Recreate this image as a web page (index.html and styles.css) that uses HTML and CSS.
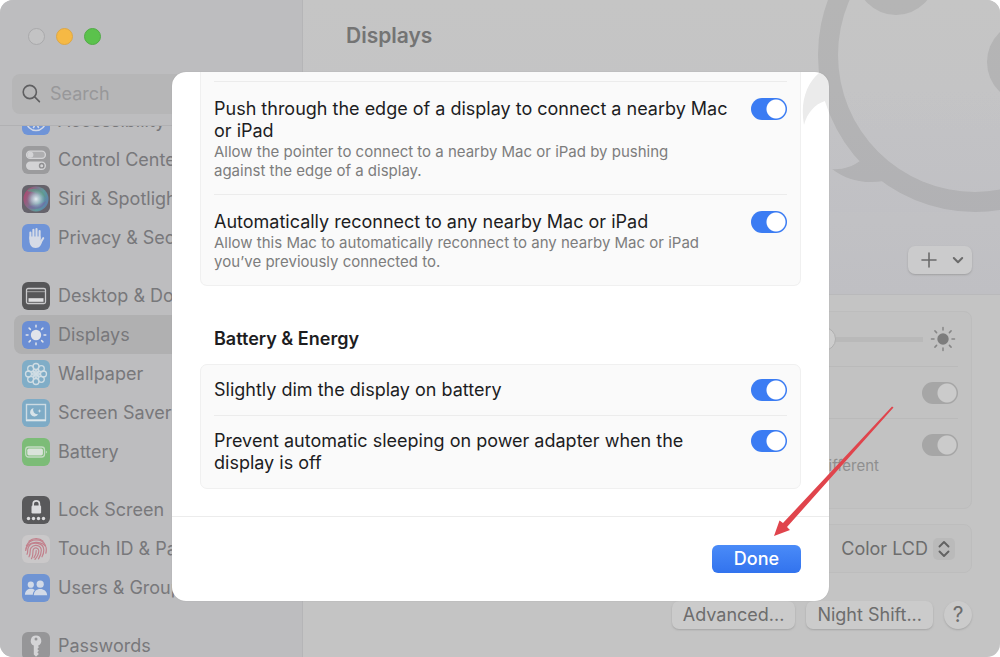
FILE: index.html
```html
<!DOCTYPE html>
<html lang="en">
<head>
	<title>Displays</title>
	<meta charset="utf-8">
	<link rel="stylesheet" href="styles.css">
</head>
<body>
<div class="window">
	<aside class="sidebar">
		<div class="lights">
			<span class="light"></span>
			<span class="light yellow"></span>
			<span class="light green"></span>
		</div>
		<label class="search">
			<svg width="20" height="20" viewBox="0 0 20 20" fill="none" stroke="#5f5f61" stroke-width="1.6" stroke-linecap="round"><circle cx="7.8" cy="8" r="6.6"/><path d="M12.7 12.9L17.4 17.6"/></svg>
			<input type="search" placeholder="Search" aria-label="Search">
		</label>
		<nav class="list">
			<ul>
				<li><a href="#">
					<svg class="icon" viewBox="0 0 28 28"><rect width="28" height="28" rx="6" fill="#6f94d8"/><circle cx="14" cy="14" r="9.5" fill="none" stroke="#d2d8e6" stroke-width="1.6"/><circle cx="14" cy="9" r="1.6" fill="#d2d8e6"/><path d="M8.5 12L14 13.2L19.5 12M14 13V16L11.5 20.5M14 16L16.5 20.5" fill="none" stroke="#d2d8e6" stroke-width="1.6" stroke-linecap="round"/></svg>
					Accessibility</a></li>
				<li><a href="#">
					<svg class="icon" viewBox="0 0 28 28"><rect width="28" height="28" rx="6" fill="#9b9b9d"/><rect x="4.6" y="5.1" width="18.8" height="7.3" rx="3.6" fill="#aeaeb0" stroke="#d3d3d5" stroke-width="1.4"/><circle cx="8.4" cy="8.7" r="3" fill="#d3d3d5"/><rect x="4" y="15.5" width="20" height="8.5" rx="4.2" fill="#d3d3d5"/><circle cx="19.7" cy="19.7" r="2.2" fill="#d3d3d5" stroke="#8f8f91" stroke-width="1.4"/></svg>
					Control Center</a></li>
				<li><a href="#">
					<svg class="icon" viewBox="0 0 28 28">
						<defs>
							<linearGradient id="siri" x1="0" y1="0.3" x2="1" y2="0.7"><stop offset="0" stop-color="#b0476f"/><stop offset="0.35" stop-color="#80708c"/><stop offset="0.65" stop-color="#609b9b"/><stop offset="1" stop-color="#5d7fae"/></linearGradient>
							<radialGradient id="glow"><stop offset="0" stop-color="#e6edf2"/><stop offset="0.5" stop-color="#c5d6e2" stop-opacity="0.6"/><stop offset="1" stop-color="#a0bccc" stop-opacity="0"/></radialGradient>
						</defs>
						<rect width="28" height="28" rx="6" fill="#66636b"/><circle cx="14" cy="14" r="12.5" fill="url(#siri)"/><path d="M5 6C12 1 22 5 24 13C18 8 10 7 5 6Z" fill="#609a87" opacity="0.7"/><path d="M6 22C13 27 22 23 24 16C18 20 12 19 6 22Z" fill="#7860a6" opacity="0.5"/><circle cx="14" cy="14" r="9" fill="url(#glow)"/></svg>
					Siri &amp; Spotlight</a></li>
				<li><a href="#">
					<svg class="icon" viewBox="0 0 28 28"><rect width="28" height="28" rx="6" fill="#6f94d8"/><g fill="none" stroke="#d6dbe6" stroke-width="2.1" stroke-linecap="round"><path d="M8.4 15V8.6M11.4 14V5.8M14.5 14V5M17.6 15V7M21.2 14.2L18.5 18.5"/></g><path d="M7.4 12.5H18.6V16.5L20.5 15.5C19.8 20.5 17.8 24 13.7 24C9.5 24 7.4 20.5 7.4 16.5Z" fill="#d6dbe6"/></svg>
					Privacy &amp; Security</a></li>
			</ul>
			<ul>
				<li><a href="#">
					<svg class="icon" viewBox="0 0 28 28"><rect width="28" height="28" rx="6" fill="#565658"/><rect x="4.5" y="6.5" width="19" height="15" rx="1.5" fill="none" stroke="#cacacc" stroke-width="1.3"/><path d="M5 9.7H23" stroke="#a5a5a7"/><rect x="6.5" y="16.2" width="15" height="3.6" fill="#dedee0"/></svg>
					Desktop &amp; Dock</a></li>
				<li class="selected"><a href="#">
					<svg class="icon" viewBox="0 0 28 28"><rect width="28" height="28" rx="6" fill="#6b8ed4"/><circle cx="14" cy="14" r="5.2" fill="#e1e4ea"/><g stroke="#e1e4ea" stroke-width="1.5" stroke-linecap="round"><path d="M14 4.2V6M14 22V23.8M4.2 14H6M22 14H23.8M7.1 7.1L8.4 8.4M19.6 19.6L20.9 20.9M7.1 20.9L8.4 19.6M19.6 8.4L20.9 7.1"/></g></svg>
					Displays</a></li>
				<li><a href="#">
					<svg class="icon" viewBox="0 0 28 28"><rect width="28" height="28" rx="6" fill="#80adc7"/><g fill="none" stroke="#d0dde4" stroke-width="1.3"><circle cx="14" cy="6.5" r="3"/><circle cx="19.3" cy="8.7" r="3"/><circle cx="21.5" cy="14" r="3"/><circle cx="19.3" cy="19.3" r="3"/><circle cx="14" cy="21.5" r="3"/><circle cx="8.7" cy="19.3" r="3"/><circle cx="6.5" cy="14" r="3"/><circle cx="8.7" cy="8.7" r="3"/><circle cx="14" cy="14" r="3.2"/><path d="M14 9.5V18.5M9.5 14H18.5M10.8 10.8L17.2 17.2M10.8 17.2L17.2 10.8"/></g></svg>
					Wallpaper</a></li>
				<li><a href="#">
					<svg class="icon" viewBox="0 0 28 28"><rect width="28" height="28" rx="6" fill="#7eabc6"/><rect x="4.5" y="5.5" width="19" height="15.5" fill="none" stroke="#cddbe3" stroke-width="1.4"/><path d="M4 21.5H24" stroke="#dde6ea" stroke-width="1.6"/><path d="M11.5 9A4.3 4.3 0 1 0 16.2 15.2A4.3 4.3 0 0 1 11.5 9Z" fill="#d8e3e9"/><path d="M17.5 10l.5 1.5 1.5.5-1.5.5-.5 1.5-.5-1.5-1.5-.5 1.5-.5z" fill="#d8e3e9"/></svg>
					Screen Saver</a></li>
				<li><a href="#">
					<svg class="icon" viewBox="0 0 28 28"><rect width="28" height="28" rx="6" fill="#7cbc77"/><rect x="3.7" y="9" width="18.8" height="10" rx="2.8" fill="none" stroke="#c4dac3" stroke-width="1.3"/><rect x="5.3" y="10.6" width="15.6" height="6.8" rx="1.6" fill="#dae3da"/><path d="M23.8 12.4C25.3 13 25.3 15 23.8 15.6Z" fill="#c4dac3"/></svg>
					Battery</a></li>
			</ul>
			<ul>
				<li><a href="#">
					<svg class="icon" viewBox="0 0 28 28"><rect width="28" height="28" rx="6" fill="#59595b"/><rect x="9.5" y="9.5" width="9.6" height="8" rx="1.2" fill="#dcdcde"/><path d="M11.2 10V7.7C11.2 3.9 17.4 3.9 17.4 7.7V10" fill="none" stroke="#dcdcde" stroke-width="1.6"/><g fill="#dcdcde"><circle cx="6.5" cy="22.5" r="1.7"/><circle cx="11.5" cy="22.5" r="1.7"/><circle cx="16.5" cy="22.5" r="1.7"/><circle cx="21.5" cy="22.5" r="1.7"/></g></svg>
					Lock Screen</a></li>
				<li><a href="#">
					<svg class="icon" viewBox="0 0 28 28"><rect width="28" height="28" rx="6" fill="#cac8c9"/><g fill="none" stroke="#c2808c" stroke-width="1.2" stroke-linecap="round"><path d="M7 6.3C11 2.5 17.5 2.6 21 6.2"/><path d="M4.4 10.8C8.3 2.9 20 3 23.5 10.5"/><path d="M3.7 15.5C3.5 5 24.3 4.8 24.3 14.2C24.3 15.8 24.2 17 23.8 18.2"/><path d="M5 19.3C6.5 16 4.8 15.4 6.5 12C9.5 6.2 21.8 7.3 21.8 15C21.8 18 21 20 20 21.8"/><path d="M7 21.8C9.3 18 7 15.4 9.2 12.7C12.5 8.6 19.3 10.5 19.3 15.5C19.3 18.5 18 21.5 16.5 23.8"/><path d="M9.5 23.7C12 19.5 10 16.5 11.5 14.2C13 12 16.8 13 16.8 15.7C16.8 18.5 15 22 13 24.4"/><path d="M14.2 15.5C14.5 18 13.5 20.5 12 22.7"/></g></svg>
					Touch ID &amp; Password</a></li>
				<li><a href="#">
					<svg class="icon" viewBox="0 0 28 28"><rect width="28" height="28" rx="6" fill="#6f94d3"/><g fill="#d2dae7"><circle cx="8.8" cy="10.7" r="3.1"/><path d="M2.9 20.8C3.2 16.5 6 14.8 8.8 14.8C10.4 14.8 11.8 15.3 12.8 16.2C11.5 17.5 10.9 19 10.8 20.8Z"/><circle cx="18.2" cy="10.2" r="3.6"/><path d="M11.8 21.3C12 17.2 14.5 15 18.2 15C21.9 15 24.7 17.2 25.2 21.3Z"/></g></svg>
					Users &amp; Groups</a></li>
			</ul>
			<ul>
				<li><a href="#">
					<svg class="icon" viewBox="0 0 28 28"><rect width="28" height="28" rx="6" fill="#969698"/><path d="M14 3.5A5.3 5.3 0 0 0 11.8 13.6V22.5L14 24.7L16.8 22L15.3 20.3L16.9 18.7L15.3 17L16.9 15.2L16 13.7A5.3 5.3 0 0 0 14 3.5Z" fill="#d4d4d6"/><circle cx="14" cy="7" r="1.5" fill="#969698"/></svg>
					Passwords</a></li>
			</ul>
		</nav>
	</aside>

	<main class="main">
		<header class="head">
			<h1>Displays</h1>
			<button class="add" aria-label="Add display">
				<svg width="16" height="16" viewBox="0 0 16 16" fill="none" stroke="#6b6b6b" stroke-width="1.6" stroke-linecap="round"><path d="M8 1V15M1 8H15"/></svg>
				<svg width="12" height="12" viewBox="0 0 12 12" fill="none" stroke="#6b6b6b" stroke-width="2" stroke-linecap="round" stroke-linejoin="round"><path d="M1.8 4L6 8.2L10.2 4"/></svg>
			</button>
		</header>
		<div class="content">
			<div class="panel">
				<div class="line bright">
					<input type="range" class="slider" value="78" aria-label="Brightness">
					<svg width="26" height="26" viewBox="0 0 26 26"><circle cx="13" cy="13" r="5.7" fill="#7d7d7d"/><g stroke="#868686" stroke-width="1.5" stroke-linecap="round"><path d="M13 1.5V4M13 22V24.5M1.5 13H4M22 13H24.5M4.9 4.9L6.6 6.6M19.4 19.4L21.1 21.1M4.9 21.1L6.6 19.4M19.4 6.6L21.1 4.9"/></g></svg>
				</div>
				<div class="line">
					<input type="checkbox" class="switch dim" checked aria-label="Automatically adjust brightness">
				</div>
				<div class="line tall">
					<p class="note">appear consistent in different</p>
					<input type="checkbox" class="switch dim" checked aria-label="True Tone">
				</div>
			</div>
			<div class="panel profile">
				<button class="popup">Color LCD
					<span class="arrows"><svg width="14" height="18" viewBox="0 0 14 18" fill="none" stroke="#626262" stroke-width="1.9" stroke-linecap="round" stroke-linejoin="round"><path d="M2.5 6.5L7 2L11.5 6.5M2.5 11.5L7 16L11.5 11.5"/></svg></span>
				</button>
			</div>
			<div class="actions">
				<button class="btn">Advanced...</button>
				<button class="btn">Night Shift...</button>
				<button class="btn help">?</button>
			</div>
		</div>
	</main>

	<section class="dialog" role="dialog" aria-label="Advanced">
		<div class="dialog_body">
			<div class="card cut">
				<div class="row">
					<label for="push">Push through the edge of a display to connect a nearby Mac or iPad
						<small>Allow the pointer to connect to a nearby Mac or iPad by pushing against the edge of a display.</small>
					</label>
					<input type="checkbox" class="switch" id="push" checked>
				</div>
				<div class="row">
					<label for="reconnect">Automatically reconnect to any nearby Mac or iPad
						<small>Allow this Mac to automatically reconnect to any nearby Mac or iPad you’ve previously connected to.</small>
					</label>
					<input type="checkbox" class="switch" id="reconnect" checked>
				</div>
			</div>
			<h2>Battery &amp; Energy</h2>
			<div class="card">
				<div class="row">
					<label for="dim">Slightly dim the display on battery</label>
					<input type="checkbox" class="switch" id="dim" checked>
				</div>
				<div class="row">
					<label for="sleep">Prevent automatic sleeping on power adapter when the display is off</label>
					<input type="checkbox" class="switch" id="sleep" checked>
				</div>
			</div>
		</div>
		<div class="dialog_foot">
			<button class="done">Done</button>
		</div>
	</section>

	<!-- logo mark, top right -->
	<svg class="mark" width="200" height="215" viewBox="800 0 200 215" fill="#000">
		<path fill-rule="evenodd" d="M818 55A157 157 0 0 0 1132 55A157 157 0 0 0 818 55ZM838 55A137 137 0 0 1 1112 55A137 137 0 0 1 838 55Z"/>
		<path d="M819 73C806 84 800 103 804 125C807 113 815 104 825 101L832 100V73Z"/>
		<path d="M832 169C841 170 852 167 860 161L868 160L890 178L884 181C865 184 848 181 832 169Z"/>
		<circle cx="896" cy="-25" r="40"/>
		<circle cx="1028" cy="62" r="41"/>
	</svg>
	<!-- red arrow -->
	<svg class="arrow" width="130" height="136" viewBox="768 404 130 136">
		<path d="M893.5 407.5L892 406.5L783 523L779.5 520.5L774 536L790 530L787 527Z" fill="#e0444c"/>
	</svg>
</div>
</body>
</html>
```
FILE: styles.css
```css
*{
	box-sizing: border-box;
	margin: 0;
	padding: 0;
}
body{
	background-color: #fff;
	font-family: Inter, "Liberation Sans", sans-serif;
	font-size: 18px;
	line-height: 22px;
	color: #1d1d1f;
}
button, input{
	font: inherit;
	color: inherit;
	border: 0;
}
ul{
	list-style: none;
}
.window{
	position: relative;
	display: flex;
	height: 100vh;
	border-radius: 13px;
	overflow: hidden;
	background-color: #c4c4c4;
}

/* sidebar */
.sidebar{
	display: flex;
	flex-direction: column;
	width: 303px;
	flex-shrink: 0;
	background-color: #bdbdbf;
	border-right: 1px solid #b5b5b7;
	color: #78787b;
}
.lights{
	display: flex;
	gap: 11px;
	padding: 28px 28px 0;
}
.light{
	width: 17px;
	height: 17px;
	border-radius: 50%;
	background-color: #c3c3c4;
	border: 1px solid #a9a9ab;
}
.yellow{
	background-color: #f6b944;
	border-color: #dda747;
}
.green{
	background-color: #5bc24c;
	border-color: #52ab47;
}
.search{
	display: flex;
	align-items: center;
	gap: 8px;
	height: 40px;
	margin: 29px 12px 11px;
	padding: 0 10px;
	border-radius: 8px;
	background-color: #b6b6b7;
}
.search svg{
	flex-shrink: 0;
}
.search input{
	width: 100%;
	background: none;
	outline: 0;
}
.search input::placeholder{
	color: #98989a;
	opacity: 1;
}
.list{
	flex: 1;
	overflow: hidden;
	padding: 0 14px;
	border-top: 1px solid #b1b1b3;
}
.list ul{
	margin-bottom: 19px;
}
.list ul:first-child{
	margin-top: -25px;
}
.list a{
	display: flex;
	align-items: center;
	gap: 8px;
	height: 39px;
	padding: 0 8px;
	color: inherit;
	text-decoration: none;
	white-space: nowrap;
}
.selected{
	border-radius: 8px;
	background-color: #b0b0b1;
}
.icon{
	width: 28px;
	height: 28px;
}

/* page behind the dialog */
.main{
	flex: 1;
	display: flex;
	flex-direction: column;
	min-width: 0;
	color: #6d6d6d;
}
.head{
	display: flex;
	flex-direction: column;
	justify-content: space-between;
	height: 295px;
	padding: 24px 28px 20px 43px;
	background: linear-gradient(#c5c5c5, #c4c4c5 30%, #c1c1c4 75%, #bfbfc3);
	border-bottom: 1px solid #b9b9bb;
}
.head h1{
	font-size: 21px;
	font-weight: 600;
	line-height: 24px;
	color: #747474;
}
.add{
	display: flex;
	align-items: center;
	align-self: flex-end;
	justify-content: space-between;
	width: 64px;
	height: 28px;
	padding: 0 8px 0 13px;
	border-radius: 7px;
	background-color: #cbcbcc;
	box-shadow: 0 1px 2px #9f9fa1;
}
.content{
	padding: 16px 28px 0 27px;
}
.panel{
	padding: 0 13px;
	border: 1px solid #bdbdbd;
	border-radius: 8px;
	background-color: #c2c2c2;
	margin-bottom: 15px;
}
.line{
	display: flex;
	justify-content: flex-end;
	align-items: center;
	height: 52px;
	border-top: 1px solid #bababa;
}
.bright{
	gap: 7px;
	height: 54px;
	padding-right: 2px;
	border-top: 0;
}
.tall{
	align-items: flex-start;
	height: 90px;
	padding-top: 15px;
}
.slider{
	appearance: none;
	width: 420px;
	height: 26px;
	background: linear-gradient(#b9b9b9, #b9b9b9) center / 100% 5px no-repeat;
}
.slider::-webkit-slider-thumb{
	appearance: none;
	width: 24px;
	height: 24px;
	border-radius: 50%;
	background-color: #cdcdcd;
	border: 1px solid #afafaf;
}
.note{
	padding-top: 22px;
	margin-right: 43px;
	font-size: 15px;
	line-height: 19px;
	white-space: nowrap;
	color: #8f8f8f;
}
.profile{
	display: flex;
	justify-content: flex-end;
	align-items: center;
	height: 49px;
	margin-bottom: 28px;
	padding: 0 16px;
}
.popup{
	display: flex;
	align-items: center;
	gap: 5px;
	background: none;
}
.arrows{
	display: flex;
	align-items: center;
	justify-content: center;
	width: 22px;
	height: 22px;
	border-radius: 5px;
	background-color: #bababa;
}
.actions{
	display: flex;
	justify-content: flex-end;
	gap: 11px;
}
.btn{
	height: 28px;
	padding: 0 11px;
	border-radius: 7px;
	background-color: #cbcbcb;
	box-shadow: 0 1px 2px #a5a5a5;
}
.help{
	width: 28px;
	padding: 0;
	border-radius: 50%;
	font-size: 21px;
}

/* toggle */
.switch{
	appearance: none;
	flex-shrink: 0;
	width: 36px;
	height: 22px;
	border-radius: 11px;
	background: radial-gradient(circle at 25px 11px, #fff 9px, transparent 10px) #3b7cf3;
	border: 0;
}
.dim{
	background: radial-gradient(circle at 25px 11px, #cbcbcb 9px, transparent 10px) #a6a6a6;
}

/* dialog lies over the window */
.dialog{
	position: absolute;
	top: 72px;
	left: 172px;
	right: 171px;
	border-radius: 14px;
	overflow: hidden;
	background-color: #fff;
	box-shadow: 0 0 1px #999;
}
.dialog_body{
	padding: 0 28px 27px;
}
.card{
	padding: 0 13px;
	border: 1px solid #f0f0f0;
	border-radius: 7px;
	background-color: #fafafa;
}
.cut{
	padding-top: 9px;
	border-top: 0;
	border-radius: 0 0 7px 7px;
}
.row{
	display: flex;
	justify-content: space-between;
	align-items: flex-start;
	gap: 16px;
	padding: 14px 0;
}
.cut .row{
	padding: 16px 0 14px;
}
.row + .row, .cut .row{
	border-top: 1px solid #ececec;
}
.row small{
	display: block;
	max-width: 505px;
	font-size: 15px;
	line-height: 19px;
	color: #7d7d7d;
}
.dialog h2{
	margin: 42px 14px 14px;
	font-size: 18px;
	font-weight: 600;
	line-height: 22px;
}
.dialog_foot{
	display: flex;
	justify-content: flex-end;
	padding: 28px;
	border-top: 1px solid #ececec;
}
.done{
	width: 89px;
	height: 28px;
	border-radius: 6px;
	background: linear-gradient(#4a8bf8, #3273ee);
	color: #fff;
	font-weight: 500;
}

/* opacity on the whole mark, so its parts can overlap */
.mark{
	position: absolute;
	top: 0;
	right: 0;
	opacity: .08;
	pointer-events: none;
}
.arrow{
	position: absolute;
	top: 404px;
	right: 102px;
	pointer-events: none;
}
```
